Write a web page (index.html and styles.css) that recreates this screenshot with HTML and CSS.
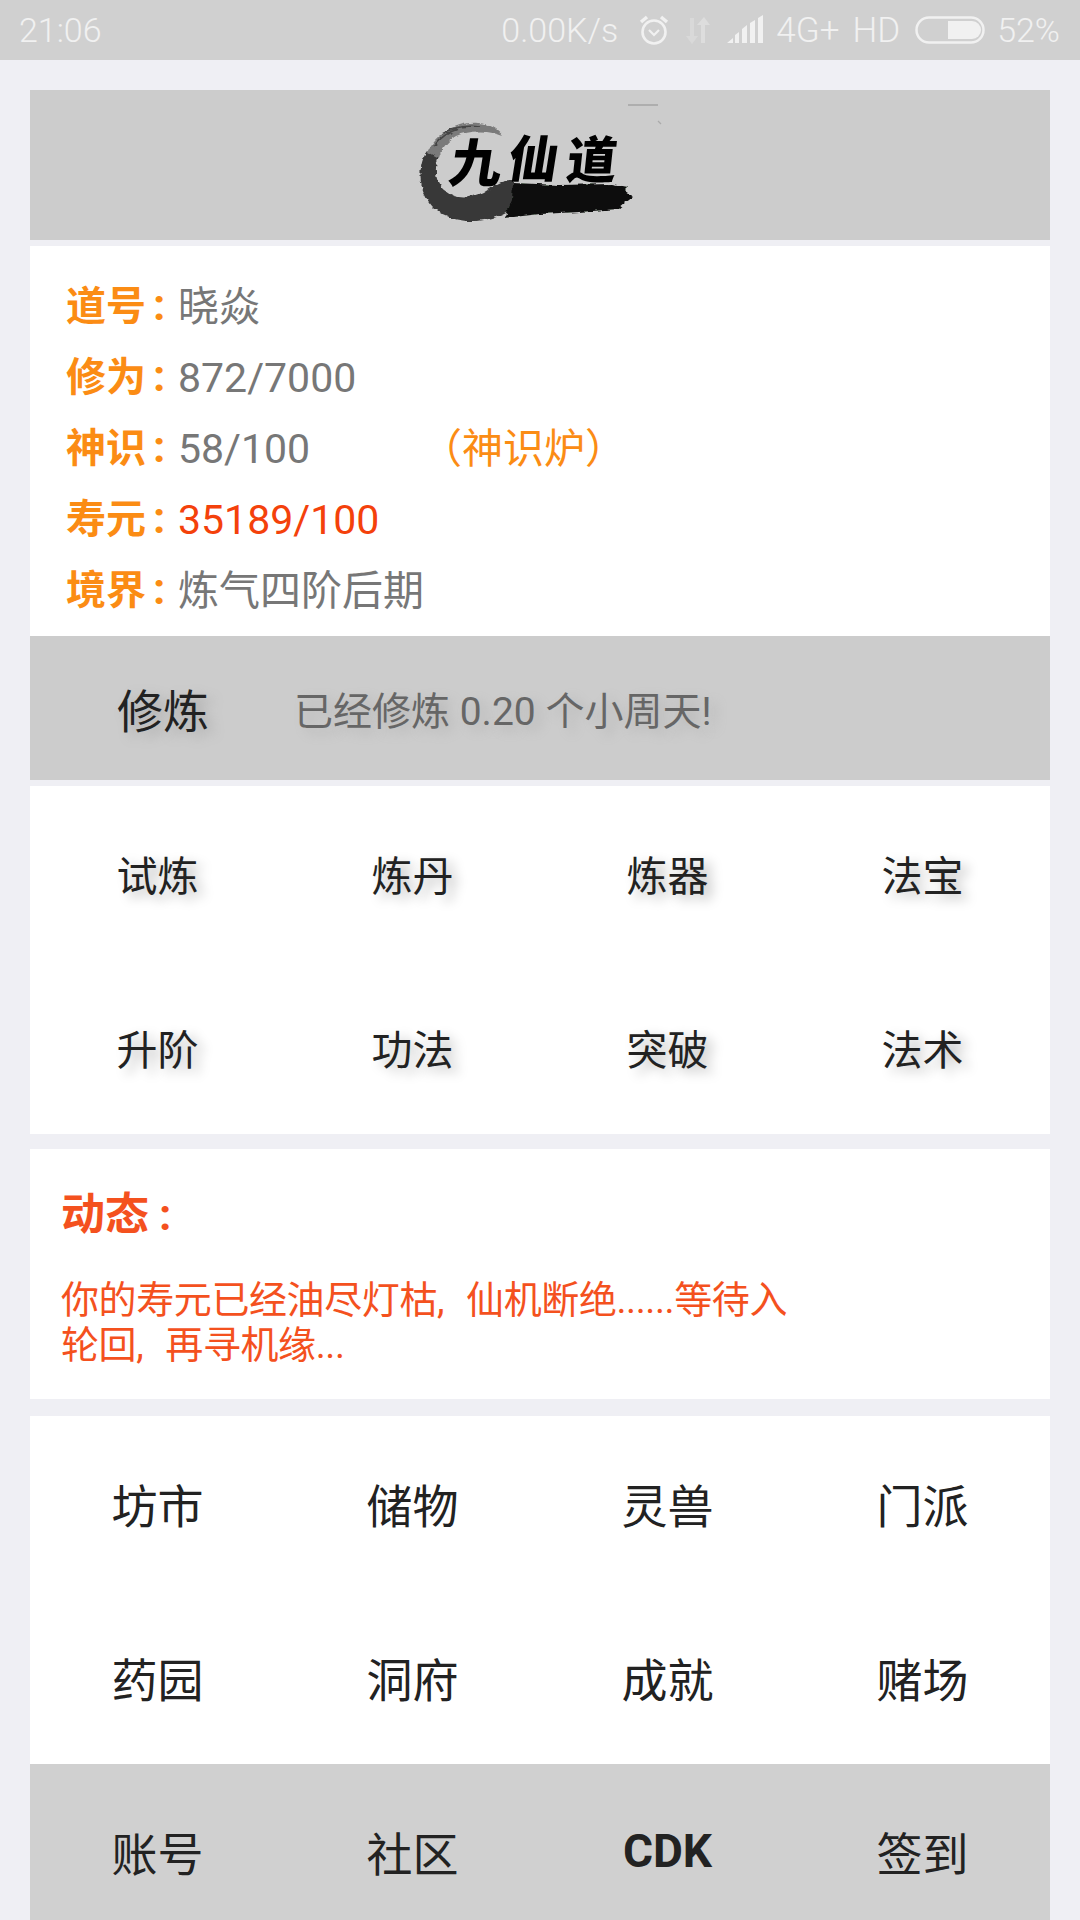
FILE: index.html
```html
<!DOCTYPE html>
<html lang="zh-CN">
<head>
<meta charset="UTF-8">
<meta name="viewport" content="width=device-width, initial-scale=1.0">
<title>九仙道</title>
<link rel="stylesheet" href="styles.css">
</head>
<body>

<div class="status-bar">
    <span class="time">21:06</span>
    <div class="status-right">
        <span class="speed">0.00K/s</span>
        <svg class="ic-alarm" width="32" height="32" viewBox="0 0 32 32" fill="none" stroke="#f1f1f1" stroke-width="2.6">
            <circle cx="16" cy="18" r="11.500"/>
            <path d="M11 16l5 5 5-5" stroke-width="2.2"/>
            <path d="M3 8l6-5M29 8l-6-5" stroke-width="3.4"/>
        </svg>
        <svg class="ic-arrows" width="30" height="30" viewBox="0 0 30 30">
            <path d="M7 3h4v18h4l-6 8-6-8h4z" fill="#d9d9d9"/>
            <path d="M18 28h4V10h5l-6-8-7 8h4z" fill="#dddddd"/>
        </svg>
        <svg class="ic-signal" width="36" height="30" viewBox="0 0 36 30" fill="#f1f1f1">
            <path d="M0 28l6-5v5zM8 28v-8l4-3v11zM15 28V14l5-4v18zM23 28V8l5-3v23zM31 28V3l5-3v28z"/>
        </svg>
        <span class="net net-g">4G+</span>
        <span class="net">HD</span>
        <svg class="ic-battery" width="70" height="28" viewBox="0 0 70 28" fill="none">
            <rect x="1.500" y="1.500" width="67" height="25" rx="12.500" stroke="#f1f1f1" stroke-width="2.500"/>
            <path d="M33 5h24a9 9 0 0 1 0 18H33z" fill="#f1f1f1"/>
        </svg>
        <span class="pct">52%</span>
    </div>
</div>

<div class="page">
    <div class="logo-bar">
        <svg class="logo" width="260" height="130" viewBox="410 100 260 130">
            <defs>
                <filter id="brush" x="-5%" y="-5%" width="110%" height="110%">
                    <feTurbulence type="fractalNoise" baseFrequency="0.09 0.3" numOctaves="2" seed="4"/>
                    <feDisplacementMap in="SourceGraphic" scale="5" xChannelSelector="R" yChannelSelector="G"/>
                </filter>
            </defs>
            <path d="M628 105h30" stroke="#9a9a9a" stroke-width="1.200"/>
            <path d="M658 121l3 3" stroke="#aaa" stroke-width="1.200"/>
            <g filter="url(#brush)">
                <path d="M514 208C490 224 456 226 436 210C418 194 416 166 428 150L439 156C433 170 436 184 445 191C456 200 470 199 484 192C494 186 500 180 514 180Z" fill="#383838"/>
                <path d="M428 152C436 134 458 121 478 123C490 124 498 129 503 136C488 130 470 130 456 136C446 142 441 150 439 158Z" fill="#7a7a7a"/>
                <path d="M442 134C452 128 466 125 480 127M434 146C440 138 448 132 458 129" stroke="#444" stroke-width="1.500" fill="none"/>
                <path d="M513 183L560 185L612 184L628 187L624 191L633 197L625 203L618 209L580 212L540 214L505 218L512 200Z" fill="#0b0f0b"/>
            </g>
            <g class="logo-text">
                <text x="447" y="182" transform="skewX(-9) translate(29 0)" font-size="52">九</text>
                <text x="505" y="177" transform="skewX(-9) translate(29 0)" font-size="50">仙</text>
                <text x="565" y="178" transform="skewX(-6) translate(19 0)" font-size="50">道</text>
            </g>
        </svg>
    </div>

    <div class="info">
        <div class="info-row"><span class="info-label">道号<i>:</i></span><span class="info-val val-cjk">晓焱</span></div>
        <div class="info-row"><span class="info-label">修为<i>:</i></span><span class="info-val">872/7000</span></div>
        <div class="info-row"><span class="info-label">神识<i>:</i></span><span class="info-val val-short">58/100</span><span class="info-link val-cjk">（神识炉）</span></div>
        <div class="info-row"><span class="info-label">寿元<i>:</i></span><span class="info-val val-red">35189/100</span></div>
        <div class="info-row"><span class="info-label">境界<i>:</i></span><span class="info-val val-cjk">炼气四阶后期</span></div>
    </div>

    <div class="practice">
        <span class="practice-btn">修炼</span>
        <span class="practice-msg">已经修炼 0.20 个小周天!</span>
    </div>

    <div class="grid grid-small">
        <div class="tile">试炼</div>
        <div class="tile">炼丹</div>
        <div class="tile">炼器</div>
        <div class="tile">法宝</div>
        <div class="tile">升阶</div>
        <div class="tile">功法</div>
        <div class="tile">突破</div>
        <div class="tile">法术</div>
    </div>

    <div class="news">
        <div class="news-title">动态<i>:</i></div>
        <p class="news-text">你的寿元已经油尽灯枯, 仙机断绝......等待入轮回, 再寻机缘...</p>
    </div>

    <div class="grid grid-big">
        <div class="tile">坊市</div>
        <div class="tile">储物</div>
        <div class="tile">灵兽</div>
        <div class="tile">门派</div>
        <div class="tile">药园</div>
        <div class="tile">洞府</div>
        <div class="tile">成就</div>
        <div class="tile">赌场</div>
        <div class="tile tile-gray">账号</div>
        <div class="tile tile-gray">社区</div>
        <div class="tile tile-gray tile-bold">CDK</div>
        <div class="tile tile-gray">签到</div>
    </div>
</div>

</body>
</html>
```

FILE: styles.css
```css
html, body {
    margin: 0;
    padding: 0;
    height: 1920px;
    overflow: hidden;
}

body {
    background-color: #efeff4;
    font-family: Roboto, "Noto Sans CJK SC", sans-serif;
    color: #222;
}

.status-bar {
    height: 60px;
    background-color: #d0d0d0;
    color: #f1f1f1;
    display: flex;
    align-items: center;
    justify-content: space-between;
    padding: 0 20px 0 19px;
    font-size: 34px;
    font-weight: 300;
}

.status-right {
    display: flex;
    align-items: center;
}

.speed { margin-right: 20px; }
.ic-arrows { margin-left: 13px; }
.ic-signal { margin-left: 14px; }
.net { margin-left: 13px; font-size: 35px; }
.ic-battery { margin-left: 15px; }
.pct { margin-left: 12px; }

.page {
    margin: 30px 30px 0;
}

.logo-bar {
    height: 150px;
    background-color: #ccc;
    position: relative;
    margin-bottom: 6px;
}

.logo {
    position: absolute;
    left: 380px;
    top: 10px;
}

.logo-text {
    font-family: "Noto Sans CJK SC", sans-serif;
    font-weight: 900;
    fill: #000;
}

.info {
    background-color: #fff;
    padding: 25px 0 10px 36px;
}

.info-row {
    display: flex;
    height: 71px;
    align-items: center;
    font-size: 41px;
    color: #777;
}

.info-label {
    width: 112px;
    flex-shrink: 0;
    padding-bottom: 7px;
    font-size: 40px;
    color: #fb8c14;
    font-weight: 700;
}

.info-label i {
    font-style: normal;
    font-size: 44px;
    margin-left: 7px;
}

.val-cjk { padding-bottom: 7px; }
.val-short { width: 243px; }
.val-red { color: #f4410b; }

.info-link {
    color: #fb8c14;
}

.practice {
    height: 144px;
    background-color: #ccc;
    display: flex;
    align-items: center;
    margin-bottom: 6px;
}

.practice-btn {
    width: 264px;
    padding-left: 87px;
    box-sizing: border-box;
    font-size: 46px;
    color: #222;
    text-shadow: 7px 5px 12px #aaa;
}

.practice-msg {
    font-size: 39px;
    color: #666;
    text-shadow: 7px 5px 12px #b4b4b4;
}

.grid {
    display: grid;
    grid-template-columns: repeat(4, 1fr);
    background-color: #fff;
}

.tile {
    height: 174px;
    display: flex;
    align-items: center;
    justify-content: center;
}

.grid-small .tile {
    font-size: 41px;
    text-shadow: 7px 5px 12px #bbb;
}

.grid-big .tile {
    font-size: 46px;
}

.tile-gray {
    background-color: #d0d0d0;
}

.tile-bold {
    font-weight: 700;
}

.news {
    background-color: #fff;
    margin: 15px 0 17px;
    padding: 41px 31px 0;
    height: 250px;
    box-sizing: border-box;
    color: #f4511e;
}

.news-title {
    font-size: 44px;
    font-weight: 700;
    line-height: 50px;
}

.news-title i {
    font-style: normal;
    margin-left: 10px;
}

.news-text {
    margin: 38px 0 0;
    max-width: 740px;
    font-size: 38px;
    line-height: 45px;
    letter-spacing: -0.4px;
    word-spacing: 13px;
}
```
